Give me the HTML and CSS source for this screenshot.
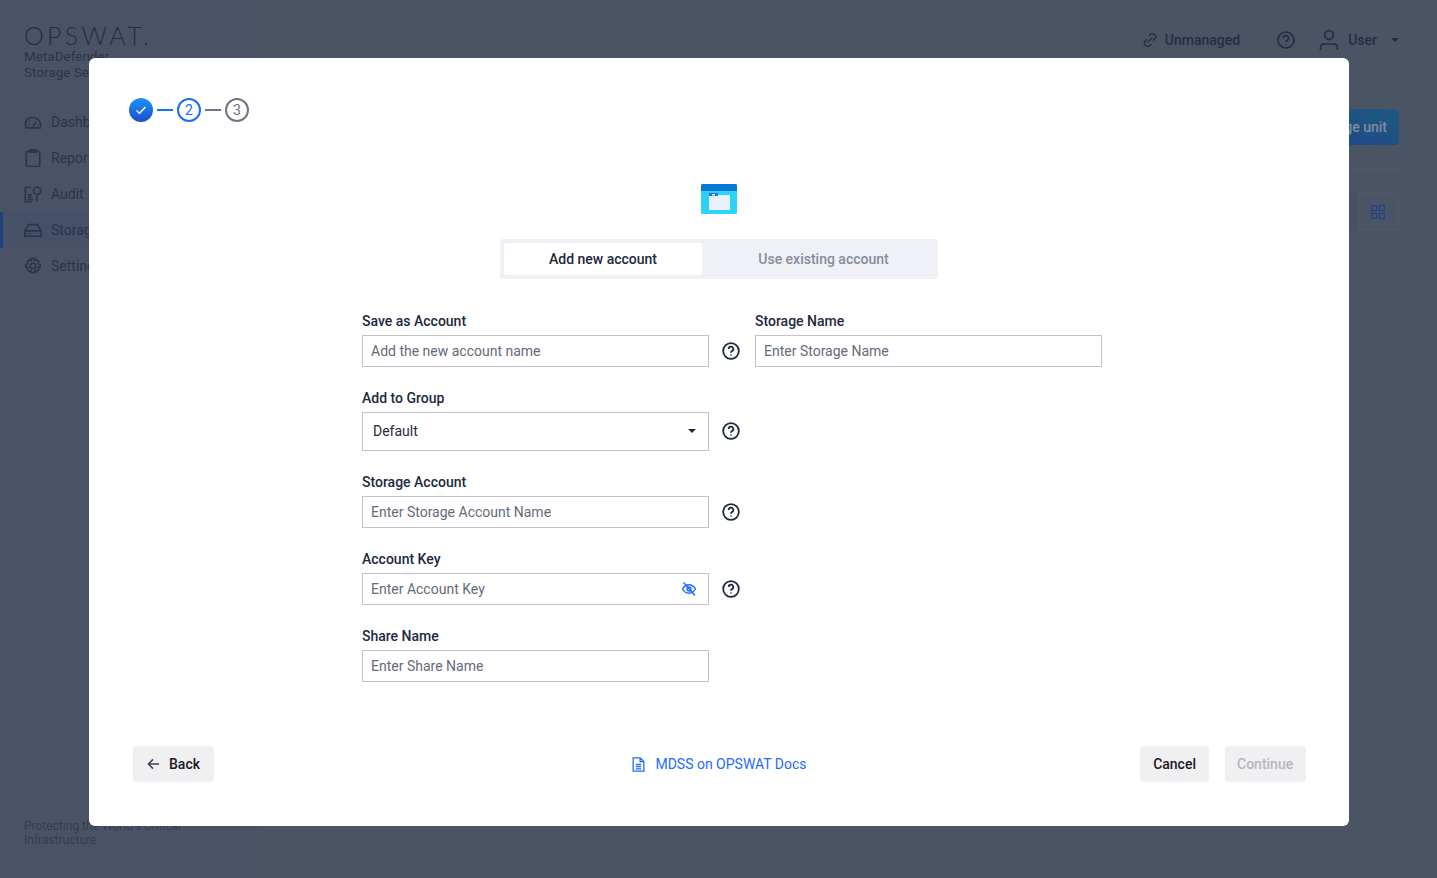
FILE: index.html
```html
<!DOCTYPE html>
<html lang="en">
<head>
    <meta charset="UTF-8">
    <title>MetaDefender Storage Security</title>
    <link rel="stylesheet" href="styles.css">
</head>
<body>
    <div class="app">
        <!-- Sidebar behind the dialog -->
        <aside class="sidebar">
            <div class="logo">OPSWAT.</div>
            <div class="product">MetaDefender<br>Storage Security</div>
            <nav class="nav">
                <a class="nav-item">
                    <svg class="nav-icon" viewBox="0 0 20 20"><path d="M2 16.500h16c1-4-.5-8-3.500-10S7 4.500 4.500 6.500 1 12.500 2 16.500zM10 16l3-6M4.500 13h1.500M14.500 13h1.500M6 8.500l1 1"/></svg>
                    Dashboard
                </a>
                <a class="nav-item">
                    <svg class="nav-icon" viewBox="0 0 20 20"><rect x="2.500" y="2.500" width="15" height="17" rx="1.500"/><path d="M6.500 1h7v2.500h-7z"/></svg>
                    Reports
                </a>
                <a class="nav-item">
                    <svg class="nav-icon" viewBox="0 0 20 20"><path d="M9 18.500H1.500V2.500H8M4.500 11H9M4.500 13.500H8M4.500 16H10M14.500 11.500V18"/><circle cx="14.500" cy="6.500" r="4"/></svg>
                    Audit
                </a>
                <a class="nav-item active">
                    <svg class="nav-icon" viewBox="0 0 20 20"><path d="M5 4h10l4 7v6H1v-6zM1 11h18M4 14h1M7 14h1"/></svg>
                    Storage Units
                </a>
                <a class="nav-item">
                    <svg class="nav-icon" viewBox="0 0 20 20"><circle cx="10" cy="10" r="3"/><path d="M8.500 1.500h3l.5 2.500 2-1 2.500 2.500-1.200 2 2.700.6v3l-2.700.6 1.200 2-2.500 2.500-2-1.200-.5 2.500h-3l-.5-2.500-2 1.200-2.500-2.500 1.200-2-2.700-.6v-3l2.700-.6-1.200-2L6 3l2 1z"/></svg>
                    Settings
                </a>
            </nav>
            <div class="tagline">Protecting the World's Critical Infrastructure</div>
        </aside>

        <main class="content">
            <header class="topbar">
                <span class="top-link">
                    <svg class="top-icon" viewBox="0 0 16 16"><path d="M6.500 3.500l2-2a3 3 0 0 1 4.200 0l1 1a3 3 0 0 1 0 4l-2 2M9.500 12.500l-2 2a3 3 0 0 1-4.200 0l-1-1a3 3 0 0 1 0-4l2-2M5.500 10.500l5-5"/></svg>
                    Unmanaged
                </span>
                <svg class="top-help" viewBox="0 0 20 20"><circle cx="10" cy="10" r="8"/><path d="M7.500 8a2.500 2.500 0 1 1 3.700 2.200c-.8.500-1.200 1-1.200 1.800M10 14v.8"/></svg>
                <span class="top-user">
                    <svg class="user-icon" viewBox="0 0 20 22"><circle cx="10" cy="6" r="4.300"/><path d="M1.500 21v-2.500A3.500 3.500 0 0 1 5 15h10a3.500 3.500 0 0 1 3.500 3.500V21"/></svg>
                    User
                    <span class="caret dim"></span>
                </span>
            </header>
            <div class="toolbar">
                <button class="add-btn">Add storage unit</button>
            </div>
            <div class="rule"></div>
            <div class="view-row">
                <span class="view-btn list"></span>
                <span class="view-btn">
                    <svg class="grid-icon" viewBox="0 0 14 14"><rect x="0.600" y="0.600" width="5" height="5"/><rect x="8.400" y="0.600" width="5" height="5"/><rect x="0.600" y="8.400" width="5" height="5"/><rect x="8.400" y="8.400" width="5" height="5"/></svg>
                </span>
            </div>
        </main>
    </div>

    <div class="overlay">
        <div class="modal">
            <!-- Wizard steps -->
            <div class="stepper">
                <span class="step done">
                    <svg viewBox="0 0 12 12" class="check"><path d="M1.500 6.500l3 2.800 6-6.300"/></svg>
                </span>
                <span class="step-line blue"></span>
                <span class="step current">2</span>
                <span class="step-line"></span>
                <span class="step next">3</span>
            </div>

            <svg class="storage-icon" viewBox="0 0 36 30">
                <rect width="36" height="30" rx="1.500" fill="#2dd2fb"/>
                <path d="M1.500 0h33A1.500 1.500 0 0 1 36 1.500V7H0V1.500A1.500 1.500 0 0 1 1.500 0z" fill="#0577d6"/>
                <rect x="8" y="11" width="21" height="15" fill="#e9f2fb"/>
                <rect x="8" y="9" width="9" height="3" fill="#2a72ea"/>
                <rect x="11" y="10" width="3" height="1.500" fill="#e9f2fb"/>
            </svg>

            <div class="tabs">
                <button class="tab selected">Add new account</button>
                <button class="tab other">Use existing account</button>
            </div>

            <form class="form">
                <div class="form-row">
                    <div class="field">
                        <label>Save as Account</label>
                        <input class="input" placeholder="Add the new account name">
                    </div>
                    <svg class="help" viewBox="0 0 18 18"><circle cx="9" cy="9" r="7.800"/><path d="M6.700 7a2.300 2.300 0 1 1 3.400 2c-.8.500-1.100.9-1.100 1.700M9 12.500v.9"/></svg>
                    <div class="field side-field">
                        <label>Storage Name</label>
                        <input class="input" placeholder="Enter Storage Name">
                    </div>
                </div>
                <div class="form-row">
                    <div class="field">
                        <label>Add to Group</label>
                        <div class="select">Default <span class="caret"></span></div>
                    </div>
                    <svg class="help" viewBox="0 0 18 18"><circle cx="9" cy="9" r="7.800"/><path d="M6.700 7a2.300 2.300 0 1 1 3.400 2c-.8.500-1.100.9-1.100 1.700M9 12.500v.9"/></svg>
                </div>
                <div class="form-row">
                    <div class="field">
                        <label>Storage Account</label>
                        <input class="input" placeholder="Enter Storage Account Name">
                    </div>
                    <svg class="help" viewBox="0 0 18 18"><circle cx="9" cy="9" r="7.800"/><path d="M6.700 7a2.300 2.300 0 1 1 3.400 2c-.8.500-1.100.9-1.100 1.700M9 12.500v.9"/></svg>
                </div>
                <div class="form-row">
                    <div class="field">
                        <label>Account Key</label>
                        <div class="input-wrap">
                            <input class="input" placeholder="Enter Account Key">
                            <svg class="eye" viewBox="0 0 16 16"><path d="M1.500 8S4 3.800 8 3.800 14.500 8 14.500 8 12 12.200 8 12.200 1.500 8 1.500 8z"/><circle cx="8" cy="8" r="2"/><path d="M2.500 1.500l11.500 13"/></svg>
                        </div>
                    </div>
                    <svg class="help" viewBox="0 0 18 18"><circle cx="9" cy="9" r="7.800"/><path d="M6.700 7a2.300 2.300 0 1 1 3.400 2c-.8.500-1.100.9-1.100 1.700M9 12.500v.9"/></svg>
                </div>
                <div class="form-row">
                    <div class="field">
                        <label>Share Name</label>
                        <input class="input" placeholder="Enter Share Name">
                    </div>
                </div>
            </form>

            <div class="footer">
                <button class="btn back">
                    <svg class="arrow" viewBox="0 0 14 14"><path d="M13 7H1.500M6.500 2L1.500 7l5 5"/></svg>
                    Back
                </button>
                <a class="docs">
                    <svg class="doc-icon" viewBox="0 0 12 14"><path d="M1 .8h6.500L11 4.300v8.900H1zM7.500.8v3.500H11M3.500 7h5M3.500 9h5M3.500 11h5"/></svg>
                    MDSS on OPSWAT Docs
                </a>
                <div class="footer-right">
                    <button class="btn">Cancel</button>
                    <button class="btn disabled">Continue</button>
                </div>
            </div>
        </div>
    </div>
</body>
</html>
```

FILE: styles.css
```css
* {
    box-sizing: border-box;
    margin: 0;
    padding: 0;
}

body {
    height: 878px;
    overflow: hidden;
    background-color: #4b5465;
    font-family: Roboto, "Liberation Sans", sans-serif;
    color: #1d2940;
}

/* Page behind the dialog */
.app {
    display: flex;
    height: 100%;
}

.sidebar {
    position: relative;
    width: 258px;
    padding-top: 23px;
    background-color: #4a5365;
    color: #2b354b;
}

.logo {
    padding-left: 24px;
    font-family: Lato, sans-serif;
    font-size: 25px;
    font-weight: 300;
    line-height: 24px;
    letter-spacing: 3.300px;
    color: #242f44;
}

.product {
    padding-left: 24px;
    margin-top: 1px;
    font-size: 13.500px;
    line-height: 16px;
}

.nav {
    margin-top: 24px;
}

.nav-item {
    display: flex;
    align-items: center;
    gap: 9px;
    height: 36px;
    padding-left: 24px;
    font-size: 14px;
    white-space: nowrap;
}

.nav-item.active {
    background-color: #465066;
    box-shadow: inset 3px 0 0 #21407f;
}

.nav-icon {
    width: 18px;
    height: 18px;
    fill: none;
    stroke: #2b354b;
    stroke-width: 1.800;
}

.tagline {
    position: absolute;
    left: 24px;
    top: 819px;
    width: 170px;
    font-size: 12px;
    line-height: 14px;
    color: #343e54;
}

.content {
    flex: 1;
    padding-right: 38px;
}

.topbar {
    display: flex;
    justify-content: flex-end;
    align-items: center;
    height: 80px;
    font-size: 14px;
    font-weight: 500;
    color: #242f44;
}

.top-link {
    display: flex;
    align-items: center;
    gap: 8px;
    margin-right: 36px;
}

.top-icon {
    width: 14px;
    height: 14px;
    fill: none;
    stroke: #242f44;
    stroke-width: 1.600;
}

.top-help {
    width: 20px;
    height: 20px;
    margin-right: 23px;
    fill: none;
    stroke: #242f44;
    stroke-width: 1.700;
}

.top-user {
    display: flex;
    align-items: center;
    gap: 9px;
}

.user-icon {
    width: 20px;
    height: 22px;
    fill: none;
    stroke: #242f44;
    stroke-width: 1.700;
}

.caret {
    width: 0;
    height: 0;
    border-left: 4px solid transparent;
    border-right: 4px solid transparent;
    border-top: 4px solid #1d2940;
}

.caret.dim {
    margin-left: 5px;
    border-top-color: #242f44;
}

.toolbar {
    display: flex;
    justify-content: flex-end;
    margin-top: 29px;
}

.add-btn {
    height: 36px;
    width: 140px;
    padding-right: 12px;
    border: none;
    border-radius: 4px;
    background: linear-gradient(20deg, #22408a, #1d5a80);
    color: #7f8ca3;
    font-family: Roboto, sans-serif;
    font-size: 14px;
    font-weight: 500;
    text-align: right;
}

.rule {
    height: 1px;
    margin-top: 24px;
    background-color: #515a6b;
}

.view-row {
    display: flex;
    justify-content: flex-end;
    margin-top: 23px;
}

.view-btn {
    display: flex;
    align-items: center;
    justify-content: center;
    width: 41px;
    height: 37px;
    border: 1px solid #515a6b;
}

.view-btn.list {
    background-color: #485163;
    border: none;
}

.grid-icon {
    width: 14px;
    height: 14px;
    margin-right: 1px;
    fill: none;
    stroke: #22408a;
    stroke-width: 1.200;
}

/* Dialog */
.overlay {
    position: fixed;
    top: 0;
    left: 0;
    right: 0;
    bottom: 0;
    padding: 58px 88px 0 89px;
}

.modal {
    position: relative;
    display: flex;
    flex-direction: column;
    height: 768px;
    padding: 40px 43px 44px 40px;
    border-radius: 6px;
    background-color: #fff;
}

.stepper {
    display: flex;
    align-items: center;
    gap: 4px;
    height: 24px;
}

.step {
    display: flex;
    align-items: center;
    justify-content: center;
    width: 24px;
    height: 24px;
    border-radius: 50%;
    font-size: 14px;
}

.step.done {
    background: linear-gradient(to bottom, #1a93fb, #1c4fc9);
}

.check {
    width: 12px;
    height: 12px;
    fill: none;
    stroke: #fff;
    stroke-width: 1.500;
}

.step.current {
    border: 2px solid #1d6bfc;
    color: #1d6bfc;
}

.step.next {
    border: 2px solid #707584;
    color: #707584;
}

.step-line {
    width: 16px;
    height: 2px;
    background-color: #707584;
}

.step-line.blue {
    background-color: #1d6bfc;
}

.storage-icon {
    display: block;
    width: 36px;
    height: 30px;
    margin: 62px 0 0 572px;
}

.tabs {
    display: flex;
    width: 438px;
    height: 40px;
    margin: 25px 0 0 371px;
    padding: 4px;
    border-radius: 3px;
    background-color: #f0f1f6;
}

.tab {
    border: none;
    border-radius: 3px;
    background: none;
    color: #868c9c;
    font-family: Roboto, sans-serif;
    font-size: 14px;
    font-weight: 500;
    line-height: 16px;
}

.tab.selected {
    width: 198px;
    background-color: #fff;
    color: #1d2940;
}

.tab.other {
    width: 232px;
    padding-left: 11px;
}

.form {
    margin: 34px 0 0 233px;
}

.form-row {
    display: flex;
    align-items: flex-end;
    margin-bottom: 23px;
}

.field {
    width: 347px;
}

.side-field {
    margin-left: 15px;
}

.field label {
    display: block;
    height: 17px;
    margin-bottom: 5px;
    font-size: 14px;
    font-weight: 500;
    line-height: 16px;
    color: #1d2940;
}

.input {
    display: block;
    width: 100%;
    height: 32px;
    padding: 0 8px;
    border: 1px solid #c1c3c9;
    border-radius: 0;
    outline: none;
    font-family: Roboto, sans-serif;
    font-size: 14px;
    color: #1d2940;
}

.input::placeholder {
    color: #646b7a;
    opacity: 1;
}

.select {
    display: flex;
    align-items: center;
    justify-content: space-between;
    height: 39px;
    padding: 0 12px 1px 10px;
    border: 1px solid #c1c3c9;
    font-size: 14px;
    color: #1d2940;
}

.input-wrap {
    position: relative;
}

.eye {
    position: absolute;
    right: 12px;
    top: 8px;
    width: 16px;
    height: 16px;
    fill: none;
    stroke: #1d6bfc;
    stroke-width: 1.400;
}

.help {
    flex: none;
    width: 18px;
    height: 18px;
    margin-left: 13px;
    margin-bottom: 7px;
    fill: none;
    stroke: #1d2940;
    stroke-width: 1.800;
}

.form-row:nth-child(2) .help {
    margin-bottom: 11px;
}

.footer {
    display: grid;
    grid-template-columns: 1fr auto 1fr;
    align-items: center;
    margin-top: auto;
    padding-left: 4px;
}

.btn {
    display: flex;
    align-items: center;
    gap: 9px;
    height: 36px;
    padding: 0 13px;
    border: none;
    border-radius: 4px;
    background-color: #f0f0f2;
    color: #1a1a1f;
    font-family: Roboto, sans-serif;
    font-size: 14px;
    font-weight: 500;
}

.btn.back {
    width: 81px;
    padding: 0 14px;
}

.arrow {
    width: 14px;
    height: 14px;
    fill: none;
    stroke: #3a4356;
    stroke-width: 1.600;
}

.btn.disabled {
    width: 81px;
    padding: 0 12px;
    color: #b5b7be;
}

.docs {
    display: flex;
    align-items: center;
    gap: 10px;
    font-size: 14px;
    font-weight: 400;
    color: #1d6bfc;
}

.doc-icon {
    width: 13px;
    height: 15px;
    fill: none;
    stroke: #1d6bfc;
    stroke-width: 1.200;
}

.footer-right {
    display: flex;
    justify-content: flex-end;
    gap: 16px;
}
```
